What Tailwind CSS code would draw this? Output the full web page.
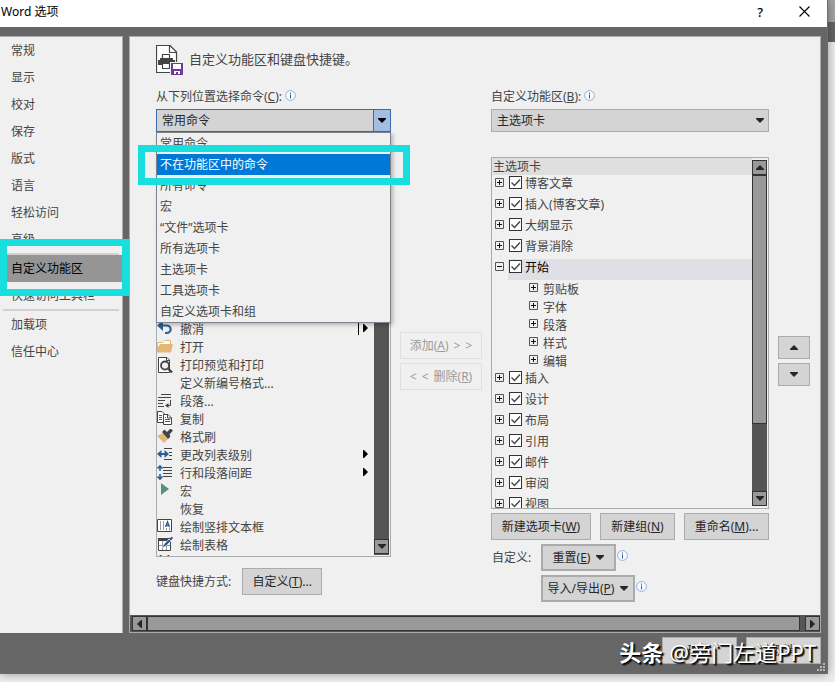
<!DOCTYPE html>
<html lang="zh-CN">
<head>
    <meta charset="UTF-8">
    <meta name="viewport" content="width=device-width, initial-scale=1.0">
    <title>Word 选项</title>
    <!-- Tailwind CSS CDN -->
    <script src="https://cdn.jsdelivr.net/npm/@tailwindcss/browser@4"></script>
</head>
<body class="flex min-h-screen items-start bg-[#f0f0f0] font-['Noto_Sans','Noto_Sans_CJK_SC',sans-serif] text-xs leading-[18px] text-[#444444]">

    <!-- Shared icons -->
    <svg class="hidden">
        <symbol id="info" viewBox="0 0 11 11">
            <circle cx="5.5" cy="5.5" r="4.9" fill="#f7faff" stroke="#8fb2e0"/>
            <path d="M5 2.500h1v1.200H5zM5 4.600h1V8.500H5z" fill="#3d5f96"/>
        </symbol>
        <symbol id="down" viewBox="0 0 8 5"><path d="M0 0h8v1L4 5 0 1z" fill="currentColor"/></symbol>
        <symbol id="up" viewBox="0 0 8 5"><path d="M0 5h8V4L4 0 0 4z" fill="currentColor"/></symbol>
        <symbol id="left" viewBox="0 0 5 8"><path d="M5 0v8H4L0 4l4-4z" fill="currentColor"/></symbol>
        <symbol id="right" viewBox="0 0 5 8"><path d="M0 0v8h1l4-4-4-4z" fill="currentColor"/></symbol>
    </svg>

    <!-- Dialog window -->
    <div class="relative z-10 flex-1 border-r border-b border-[#2e7cc4] bg-[#666666] shadow-[0_0_10px_rgba(0,0,0,0.4)]">

        <!-- Title bar -->
        <header class="flex h-[27px] items-center bg-white pr-4 pb-1 pl-px text-black">
            <h1 class="flex-1">Word 选项</h1>
            <button type="button" aria-label="帮助" class="mr-9 text-[13px] font-medium">?</button>
            <button type="button" aria-label="关闭" class="mr-px">
                <svg class="h-[11px] w-[11px]" viewBox="0 0 11 11" stroke="#000" stroke-width="1.1"><path d="M.5.5l10 10M10.500.5l-10 10"/></svg>
            </button>
        </header>

        <div class="flex gap-1.5 pt-[9px] pr-1.5">
            <!-- Sidebar -->
            <nav class="relative w-[123px] shrink-0 border-t border-r border-[#ababab] bg-[#f0f0f0]">
                <a href="#" class="block h-[27px] pl-[11px] leading-[27px]">常规</a>
                <a href="#" class="block h-[27px] pl-[11px] leading-[27px]">显示</a>
                <a href="#" class="block h-[27px] pl-[11px] leading-[27px]">校对</a>
                <a href="#" class="block h-[27px] pl-[11px] leading-[27px]">保存</a>
                <a href="#" class="block h-[27px] pl-[11px] leading-[27px]">版式</a>
                <a href="#" class="block h-[27px] pl-[11px] leading-[27px]">语言</a>
                <a href="#" class="block h-[27px] pl-[11px] leading-[27px]">轻松访问</a>
                <a href="#" class="block h-[27px] pl-[11px] leading-[27px]">高级</a>
                <hr class="mx-[3px] border-t-2 border-[#d2d2d2]">
                <div class="relative">
                    <a href="#" class="block h-[27px] bg-[#959595] pl-[11px] leading-[27px] text-black">自定义功能区</a>
                    <!-- Highlight frame -->
                    <div class="absolute -top-4 -right-[7px] -bottom-3.5 left-0 z-10 border-[7px] border-[#19dede]"></div>
                </div>
                <a href="#" class="block h-[27px] pl-[11px] leading-[27px]">快速访问工具栏</a>
                <hr class="mx-[3px] border-t-2 border-[#d2d2d2]">
                <a href="#" class="block h-[27px] pl-[11px] leading-[27px]">加载项</a>
                <a href="#" class="block h-[27px] pl-[11px] leading-[27px]">信任中心</a>
            </nav>

            <!-- Main panel -->
            <main class="min-w-0 flex-1 border border-[#ababab] bg-[#f0f0f0]">
                <div class="flex items-start gap-1.5 pt-2 pb-3 pl-[26px]">
                    <svg class="h-[30px] w-[27px]" viewBox="0 0 27 30" fill="none">
                        <path d="M.5.500H14L20.500 7v20.500H.5z" fill="#fff" stroke="#444" stroke-width="1.200"/>
                        <path d="M13.500.500v7h7" stroke="#444" stroke-width="1.200"/>
                        <path d="M2 15h2v-2h13v2h2v5H2z" fill="#444"/>
                        <path d="M6.500 9.500h7v4h-7zM6.500 18.500h7v5h-7z" fill="#fff" stroke="#444" stroke-width="1.200"/>
                        <path d="M14 17h13v13H14z" fill="#f0f0f0"/>
                        <path d="M15 18h12v12H15z" fill="#6f3c94"/>
                        <path d="M17 19h8v5h-8zM18 26h6v3h-2v-2h-2v2h-2z" fill="#fff"/>
                    </svg>
                    <h2 class="text-[13px] leading-7">自定义功能区和键盘快捷键。</h2>
                </div>

                <div class="grid grid-cols-[235fr_82px_278fr_32px] gap-[9px] pr-2.5 pb-[13px] pl-[26px]">

                    <!-- Commands to choose from -->
                    <section>
                        <div class="flex h-[18px] items-start gap-[3px]">
                            <label for="source" class="leading-5">从下列位置选择命令(<u>C</u>):</label>
                            <svg class="mt-[3px] h-[11px] w-[11px]"><use href="#info"/></svg>
                        </div>
                        <div class="relative mt-1">
                            <select id="source" class="block h-[23px] w-full appearance-none border border-[#3c6ab0] bg-[#d4d4d4] pl-[5px] text-[#262626]">
                                <option>常用命令</option>
                            </select>
                            <span class="pointer-events-none absolute inset-y-0 right-0 flex w-[18px] items-center justify-center border border-[#3c6ab0] bg-[#a3bde3] text-black">
                                <svg class="h-[5px] w-2"><use href="#down"/></svg>
                            </span>
                            <!-- Open drop-down -->
                            <ul role="listbox" aria-label="命令位置" class="absolute inset-x-0 top-full z-20 border border-[#7d828c] bg-[#f0f0f0] leading-[21px] shadow-[2px_2px_4px_rgba(0,0,0,0.25)]">
                                <li role="option" class="h-[21px] pl-[3px]">常用命令</li>
                                <li role="option" aria-selected="true" class="relative h-[21px] bg-[#0078d7] pl-[3px] text-white">不在功能区中的命令
                                    <span class="absolute -top-[9px] -right-5 -bottom-2.5 -left-[19px] z-10 border-[7px] border-[#19dede]"></span>
                                </li>
                                <li role="option" class="h-[21px] pl-[3px]">所有命令</li>
                                <li role="option" class="h-[21px] pl-[3px]">宏</li>
                                <li role="option" class="h-[21px] pl-[3px]">“文件”选项卡</li>
                                <li role="option" class="h-[21px] pl-[3px]">所有选项卡</li>
                                <li role="option" class="h-[21px] pl-[3px]">主选项卡</li>
                                <li role="option" class="h-[21px] pl-[3px]">工具选项卡</li>
                                <li role="option" class="h-[21px] pl-[3px]">自定义选项卡和组</li>
                            </ul>
                        </div>

                        <div class="mt-[5px] flex h-[420px] overflow-hidden border border-[#ababab]">
                            <ul id="commands" class="flex-1 pt-[183px]"></ul>
                            <div class="my-px mr-px flex w-[15px] flex-col justify-end bg-[#555555]">
                                <button type="button" aria-label="向下滚动" class="mb-px flex h-[15px] items-center justify-center border border-[#333333] bg-[#999999] text-[#262626]">
                                    <svg class="h-[5px] w-2"><use href="#down"/></svg>
                                </button>
                            </div>
                        </div>

                        <div class="mt-[11px] flex items-center gap-[11px]">
                            <span>键盘快捷方式:</span>
                            <button type="button" class="h-[27px] w-20 border border-[#ababab] bg-[#d4d4d4] text-[#262626]">自定义(<u>T</u>)...</button>
                        </div>
                    </section>

                    <!-- Add / remove -->
                    <div class="flex flex-col justify-center gap-1 pt-[33px] text-[#9a9a9a]">
                        <button type="button" disabled class="flex h-[27px] items-center justify-center gap-[5px] border border-[#e0e0e0]"><span>添加(<u>A</u>)</span><span>&gt;</span><span>&gt;</span></button>
                        <button type="button" disabled class="flex h-[27px] items-center justify-center gap-[5px] border border-[#e0e0e0]"><span>&lt;</span><span>&lt;</span><span>删除(<u>R</u>)</span></button>
                    </div>

                    <!-- Ribbon tabs -->
                    <section>
                        <div class="flex h-[18px] items-start gap-[3px]">
                            <label for="ribbon" class="leading-5">自定义功能区(<u>B</u>):</label>
                            <svg class="mt-[3px] h-[11px] w-[11px]"><use href="#info"/></svg>
                        </div>
                        <div class="relative mt-1">
                            <select id="ribbon" class="block h-[23px] w-full appearance-none border border-[#ababab] bg-[#d4d4d4] pl-[5px] text-[#262626]">
                                <option>主选项卡</option>
                            </select>
                            <svg class="pointer-events-none absolute top-[9px] right-[5px] h-[5px] w-2 text-[#262626]"><use href="#down"/></svg>
                        </div>

                        <div class="mt-[25px] flex h-[352px] overflow-hidden border border-[#ababab]">
                            <div class="flex-1">
                                <h3 class="h-[17px] bg-[#dfdfdf] pl-px leading-[17px]">主选项卡</h3>
                                <ul id="tabs"></ul>
                            </div>
                            <div class="my-0.5 mr-px flex w-[15px] flex-col bg-[#555555]">
                                <button type="button" aria-label="向上滚动" class="flex h-[15px] items-center justify-center border border-[#333333] bg-[#999999] text-[#262626]">
                                    <svg class="h-[5px] w-2"><use href="#up"/></svg>
                                </button>
                                <div class="h-[249px] border border-[#333333] bg-[#999999]"></div>
                                <button type="button" aria-label="向下滚动" class="mt-auto flex h-[15px] items-center justify-center border border-[#333333] bg-[#999999] text-[#262626]">
                                    <svg class="h-[5px] w-2"><use href="#down"/></svg>
                                </button>
                            </div>
                        </div>

                        <div class="mt-1 flex justify-between text-[#262626]">
                            <button type="button" class="h-[27px] w-[100px] border border-[#ababab] bg-[#d4d4d4]">新建选项卡(<u>W</u>)</button>
                            <button type="button" class="h-[27px] w-[75px] border border-[#ababab] bg-[#d4d4d4]">新建组(<u>N</u>)</button>
                            <button type="button" class="h-[27px] w-[85px] border border-[#ababab] bg-[#d4d4d4]">重命名(<u>M</u>)...</button>
                        </div>

                        <div class="mt-1 grid grid-cols-[50px_1fr] items-center gap-y-1">
                            <span class="pl-px">自定义:</span>
                            <div class="flex gap-px">
                                <button type="button" class="flex h-[27px] w-[75px] items-center justify-center gap-1.5 border-2 border-[#ababab] bg-[#d4d4d4] text-[#262626]">
                                    <span>重置(<u>E</u>)</span>
                                    <svg class="h-[5px] w-2"><use href="#down"/></svg>
                                </button>
                                <svg class="mt-1.5 h-[11px] w-[11px]"><use href="#info"/></svg>
                            </div>
                            <div class="col-start-2 flex gap-px">
                                <button type="button" class="flex h-[27px] w-[94px] items-center justify-center gap-1.5 border-2 border-[#ababab] bg-[#d4d4d4] text-[#262626]">
                                    <span>导入/导出(<u>P</u>)</span>
                                    <svg class="h-[5px] w-2"><use href="#down"/></svg>
                                </button>
                                <svg class="mt-1.5 h-[11px] w-[11px]"><use href="#info"/></svg>
                            </div>
                        </div>
                    </section>

                    <!-- Move up / down -->
                    <div class="flex flex-col justify-center gap-1 pt-[33px] text-[#262626]">
                        <button type="button" aria-label="上移" class="flex h-[23px] items-center justify-center border border-[#ababab] bg-[#d4d4d4]">
                            <svg class="h-[5px] w-2"><use href="#up"/></svg>
                        </button>
                        <button type="button" aria-label="下移" class="flex h-[23px] items-center justify-center border border-[#ababab] bg-[#d4d4d4]">
                            <svg class="h-[5px] w-2"><use href="#down"/></svg>
                        </button>
                    </div>
                </div>

                <!-- Horizontal scroll bar -->
                <div class="flex h-[17px] bg-[#555555] py-px pl-0.5">
                    <button type="button" aria-label="向左滚动" class="flex w-[15px] items-center justify-center border border-[#333333] bg-[#999999] text-[#262626]">
                        <svg class="h-2 w-[5px]"><use href="#left"/></svg>
                    </button>
                    <div class="mr-[5px] flex-1 border border-[#333333] bg-[#999999]"></div>
                    <button type="button" aria-label="向右滚动" class="flex w-[15px] items-center justify-center border border-[#333333] bg-[#999999] text-[#262626]">
                        <svg class="h-2 w-[5px]"><use href="#right"/></svg>
                    </button>
                </div>
            </main>
        </div>

        <!-- Footer -->
        <footer class="relative flex justify-end gap-[9px] pt-1 pr-1.5 pb-[9px] text-[#262626]">
            <button type="button" class="h-[27px] w-[75px] border border-[#ababab] bg-[#d4d4d4]">确定</button>
            <button type="button" class="h-[27px] w-[75px] border border-[#ababab] bg-[#d4d4d4]">取消</button>
            <p class="absolute top-1 right-[11px] flex gap-1.5 text-[22px] leading-[30px] whitespace-nowrap text-white [text-shadow:1px_1px_1px_#000,2px_2px_1px_#222]">
                <b>头条</b><span>@旁门左道PPT</span>
            </p>
            <svg class="absolute right-0.5 bottom-0.5 h-2 w-2" viewBox="0 0 8 8" fill="#b5b5b5"><path d="M6 0h2v2H6zM3 3h2v2H3zM6 3h2v2H6zM0 6h2v2H0zM3 6h2v2H3zM6 6h2v2H6z"/></svg>
        </footer>
    </div>

    <!-- Window behind the dialog -->
    <div class="w-[7px]">
        <div class="h-[22px] bg-[#a6a6a6]"></div>
        <div class="h-5 bg-[#666666]"></div>
    </div>

    <script>
        const commands = [
            { name: '撤消', menu: 'split', icon: '<path d="M3 4.500h6.500a4 3.600 0 0 1 0 7.500H8" fill="none" stroke="#2b5f97" stroke-width="2.200"/><path d="M0 4.500L6-1v11z" fill="#2b5f97"/>' },
            { name: '打开', icon: '<path d="M.5 10V3.500H6L8 1.500h5.500V6" fill="#fff" stroke="#e3b778"/><path d="M0 13.500V10l3-5h13l-2 8.500z" fill="#e3b778"/>' },
            { name: '打印预览和打印', icon: '<path d="M1.500.5H10L12.500 3v12.500h-11z" fill="#fff" stroke="#444"/><path d="M9.500.5v3h3" fill="none" stroke="#444"/><circle cx="8" cy="8.500" r="4" fill="#f0f0f0" stroke="#444" stroke-width="1.800"/><path d="M11 11.500l4 4" stroke="#444" stroke-width="2.400"/>' },
            { name: '定义新编号格式...', icon: '' },
            { name: '段落...', icon: '<path d="M4 1.500h10M1 4.500h13M1 7.500h7M1 10.500h5M1 13.500h6M13.500 7v5.500H10" fill="none" stroke="#444"/><path d="M8 12.500l3.500-2.500v5z" fill="#444"/>' },
            { name: '复制', icon: '<path d="M.5.5H5l2.500 2.500v8.500h-7z" fill="#fff" stroke="#444"/><path d="M6.500 3.500H11l3.500 3.500v6.500h-8z" fill="#fff" stroke="#444"/><path d="M10.500 3.500v3.500h4" fill="none" stroke="#444"/><path d="M2 4.500h3M2 6.500h3M2 8.500h3M8 8.500h5M8 10.500h5M8 6.500h1" stroke="#2b5f97"/>' },
            { name: '格式刷', icon: '<path d="M0 7l6-3 5 6-4 4z" fill="#e3b778"/><path d="M5 3l2.500-2.500L10 3l3.500-3.500L16 1.500l-3.500 4 1 2L11 10z" fill="#444"/>' },
            { name: '更改列表级别', menu: 'plain', icon: '<path d="M7 1.500h8M12 5.500h3M12 8.500h3M7 12.500h8" stroke="#444"/><path d="M3 7h6" stroke="#2b5f97" stroke-width="2"/><path d="M0 7l4.500-4v8zM12 7L7.500 3v8z" fill="#2b5f97"/>' },
            { name: '行和段落间距', menu: 'plain', icon: '<path d="M6 2.500h9M6 5.500h9M6 8.500h9M6 11.500h9" stroke="#444"/><path d="M3 1v5M3 9v5M.5 3.500L3 1l2.500 2.500M.5 11.500L3 14l2.500-2.500" fill="none" stroke="#2b5f97" stroke-width="1.600"/>' },
            { name: '宏', icon: '<path d="M4 0l8 6-8 6z" fill="#55927b"/>' },
            { name: '恢复', icon: '' },
            { name: '绘制竖排文本框', icon: '<path d="M.5.5h14v12H.5z" fill="#fff" stroke="#444"/><path d="M3.500 2v9M6.500 2v9M9.500 9v2.500M12.500 9v2.500" stroke="#999"/><path d="M8.500 8L10.500 3 12.500 8M9 6.500h3" fill="none" stroke="#2b5f97" stroke-width="1.400"/>' },
            { name: '绘制表格', icon: '<path d="M1.500 1.500h12v12h-12z" fill="#fff" stroke="#444"/><path d="M1 1h10v3H1z" fill="#444"/><path d="M2 8.500h11M5.500 4v9M9.500 4v9" stroke="#999"/><path d="M5 11l2-4 5-5 2 2-5 5z" fill="#2b5f97" stroke="#fff" stroke-width=".6"/><path d="M13 1l2-1.500 1 1.500-1.500 2z" fill="#2b5f97"/>' },
            { name: '', icon: '<path d="M3 0l2 2M12 0l-2 2" stroke="#444" stroke-width="1.500"/>' }
        ];

        const tabs = [
            { name: '博客文章' },
            { name: '插入(博客文章)' },
            { name: '大纲显示' },
            { name: '背景消除' },
            { name: '开始', groups: ['剪贴板', '字体', '段落', '样式', '编辑'] },
            { name: '插入' },
            { name: '设计' },
            { name: '布局' },
            { name: '引用' },
            { name: '邮件' },
            { name: '审阅' },
            { name: '视图' }
        ];

        // Small square box with a plus or a minus in it
        function expander(open) {
            return `<svg class="h-[9px] w-[9px] shrink-0" viewBox="0 0 9 9" stroke="#111" fill="none">
                <path d="M.5.5h8v8h-8z" stroke="#555"/><path d="${open ? 'M2 4.500h5' : 'M2 4.500h5M4.500 2v5'}"/></svg>`;
        }

        document.getElementById('commands').innerHTML = commands.map(c => `
            <li class="flex h-[18px] items-start pr-1.5">
                <svg class="mr-[7px] h-4 w-4 shrink-0" viewBox="0 0 16 16">${c.icon}</svg>
                <span class="flex-1">${c.name}</span>
                ${c.menu === 'split' ? '<span class="mt-0.5 mr-1 h-3 w-px bg-black"></span>' : ''}
                ${c.menu ? '<svg class="mt-[3px] h-2 w-[5px] text-black"><use href="#right"/></svg>' : ''}
            </li>`).join('');

        document.getElementById('tabs').innerHTML = tabs.map((t, i) => `
            <li>
                <div class="flex h-[21px] items-start pl-[3px]">
                    <span class="mt-[3px] mr-1 flex">${expander(t.groups)}</span>
                    <div class="flex h-full flex-1 items-start pl-px ${t.groups ? 'bg-[#e0dfe5] text-black' : ''}">
                        <span class="relative mt-px mr-[3px] flex">
                            <input type="checkbox" id="tab${i}" checked class="peer h-[13px] w-[13px] appearance-none border border-[#333333] bg-white">
                            <svg class="pointer-events-none absolute inset-0 hidden h-[13px] w-[13px] peer-checked:block" viewBox="0 0 13 13" fill="none" stroke="#444" stroke-width="1.400"><path d="M2.500 6.500l3 3 5.500-6"/></svg>
                        </span>
                        <label for="tab${i}">${t.name}</label>
                    </div>
                </div>
                ${t.groups ? '<ul>' + t.groups.map(g => `
                    <li class="flex h-[18px] items-start gap-[5px] pl-[37px] leading-5"><span class="mt-[3px] flex">${expander(false)}</span>${g}</li>`).join('') + '</ul>' : ''}
            </li>`).join('');
    </script>
</body>
</html>
